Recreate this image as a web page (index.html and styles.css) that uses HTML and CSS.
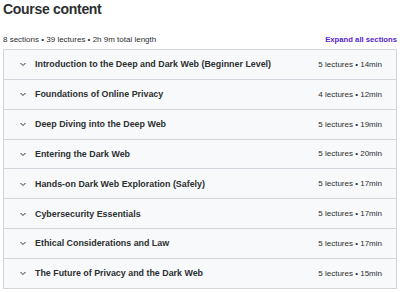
FILE: index.html
```html
<!DOCTYPE html>
<html>
	<head>
		<link rel="stylesheet" href="styles.css">
	</head>
	<body>
	<div class="curriculum">
		<h2>Course content</h2>
		<div class="summary">
			<span>8 sections &bull; 39 lectures &bull; 2h 9m total length</span>
			<a class="expand">Expand all sections</a>
		</div>
		<div class="sections">
			<div class="section">
				<span class="chevron"><svg width="8" height="8" viewBox="0 0 8 8"><path d="M1.5 3 L4 5.5 L6.5 3" fill="none" stroke="#2d2f31" stroke-width="1"/></svg></span>
				<span class="title">Introduction to the Deep and Dark Web (Beginner Level)</span>
				<span class="meta">5 lectures &bull; 14min</span>
			</div>
			<div class="section">
				<span class="chevron"><svg width="8" height="8" viewBox="0 0 8 8"><path d="M1.5 3 L4 5.5 L6.5 3" fill="none" stroke="#2d2f31" stroke-width="1"/></svg></span>
				<span class="title">Foundations of Online Privacy</span>
				<span class="meta">4 lectures &bull; 12min</span>
			</div>
			<div class="section">
				<span class="chevron"><svg width="8" height="8" viewBox="0 0 8 8"><path d="M1.5 3 L4 5.5 L6.5 3" fill="none" stroke="#2d2f31" stroke-width="1"/></svg></span>
				<span class="title">Deep Diving into the Deep Web</span>
				<span class="meta">5 lectures &bull; 19min</span>
			</div>
			<div class="section">
				<span class="chevron"><svg width="8" height="8" viewBox="0 0 8 8"><path d="M1.5 3 L4 5.5 L6.5 3" fill="none" stroke="#2d2f31" stroke-width="1"/></svg></span>
				<span class="title">Entering the Dark Web</span>
				<span class="meta">5 lectures &bull; 20min</span>
			</div>
			<div class="section">
				<span class="chevron"><svg width="8" height="8" viewBox="0 0 8 8"><path d="M1.5 3 L4 5.5 L6.5 3" fill="none" stroke="#2d2f31" stroke-width="1"/></svg></span>
				<span class="title">Hands-on Dark Web Exploration (Safely)</span>
				<span class="meta">5 lectures &bull; 17min</span>
			</div>
			<div class="section">
				<span class="chevron"><svg width="8" height="8" viewBox="0 0 8 8"><path d="M1.5 3 L4 5.5 L6.5 3" fill="none" stroke="#2d2f31" stroke-width="1"/></svg></span>
				<span class="title">Cybersecurity Essentials</span>
				<span class="meta">5 lectures &bull; 17min</span>
			</div>
			<div class="section">
				<span class="chevron"><svg width="8" height="8" viewBox="0 0 8 8"><path d="M1.5 3 L4 5.5 L6.5 3" fill="none" stroke="#2d2f31" stroke-width="1"/></svg></span>
				<span class="title">Ethical Considerations and Law</span>
				<span class="meta">5 lectures &bull; 17min</span>
			</div>
			<div class="section">
				<span class="chevron"><svg width="8" height="8" viewBox="0 0 8 8"><path d="M1.5 3 L4 5.5 L6.5 3" fill="none" stroke="#2d2f31" stroke-width="1"/></svg></span>
				<span class="title">The Future of Privacy and the Dark Web</span>
				<span class="meta">5 lectures &bull; 15min</span>
			</div>
		</div>
	</div>
	</body>
</html>
```

FILE: styles.css
```css
body {
	margin: 0;
	font-family: "Liberation Sans", Arial, sans-serif;
	background-color: white;
	color: #2d2f31;
}

.curriculum {
	padding: 0 3px;
}

h2 {
	margin: 0;
	font-size: 14px;
	font-weight: bold;
	letter-spacing: -0.3px;
	line-height: 19px;
}

.summary {
	display: flex;
	justify-content: space-between;
	align-items: center;
	margin-top: 10px;
	height: 20px;
	font-size: 8px;
	color: #2d2f31;
}

a.expand {
	color: #5624d0;
	font-weight: bold;
	font-size: 7.7px;
}

.sections {
	border: 1px solid #d1d7dc;
	background-color: #f7f9fa;
}

.section {
	display: flex;
	align-items: center;
	height: 28.85px;
	padding: 0 14px 0 15px;
	border-top: 1px solid #d1d7dc;
	font-size: 8px;
}
.section:first-child {
	border-top: none;
}

.chevron {
	display: flex;
	width: 16px;
}

.title {
	flex: 1;
	font-weight: bold;
	font-size: 8.9px;
}

.meta {
	color: #2d2f31;
}
```
